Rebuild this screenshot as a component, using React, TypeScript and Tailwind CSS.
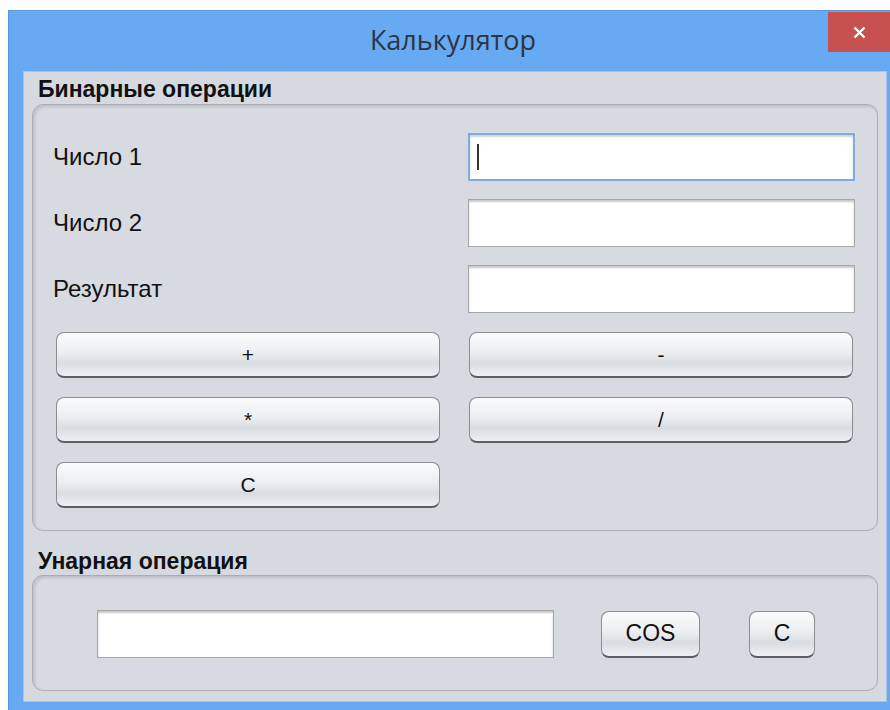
import { useState } from 'react'

// ─── Swing-style widgets on a Windows 8 frame ────────────────────────────────

const sans = 'font-["Liberation_Sans",Arial,sans-serif]'

function Field({ w, focused, value, onChange }: {
  w: string
  focused?: boolean
  value: string
  onChange: (v: string) => void
}) {
  return (
    <div
      className={
        'h-[48px] bg-white shrink-0 flex items-center ' + w + ' ' +
        (focused
          ? 'border-2 border-[#7fabdf] shadow-[inset_0_2px_2px_rgba(0,0,0,0.18)]'
          : 'border border-[#a6a6a6] shadow-[inset_0_2px_2px_rgba(0,0,0,0.22)]')
      }
    >
      {focused && <span className="ml-[7px] w-[2px] h-[26px] bg-[#333]" />}
      <input
        value={value}
        onChange={(e) => onChange(e.target.value)}
        className={`flex-1 h-full bg-transparent outline-none px-2 text-[22px] ${sans}`}
      />
    </div>
  )
}

function Btn({ label, w, h = 'h-[46px]', onClick, text = 'text-[21px]' }: {
  label: string
  w: string
  h?: string
  text?: string
  onClick?: () => void
}) {
  return (
    <button
      type="button"
      onClick={onClick}
      className={
        'shrink-0 rounded-[8px] border border-[#8a8c90] border-b-[#5c5e62] border-b-2 ' +
        'bg-[linear-gradient(#fbfbfc_0%,#eceef1_45%,#d9dce1_70%,#eef0f3_100%)] ' +
        'text-[#111] flex items-center justify-center ' + w + ' ' + h + ' ' + text + ' ' + sans
      }
    >
      {label}
    </button>
  )
}

function GroupTitle({ children }: { children: string }) {
  return (
    <div className={`pl-[14px] h-[26px] text-[23px] font-bold text-[#111] leading-[26px] ${sans}`}>
      {children}
    </div>
  )
}

const boxCls =
  'mx-[8px] rounded-[11px] border border-[#a9acb3] shadow-[inset_2px_2px_3px_rgba(0,0,0,0.12)] bg-[#d7dae0]'

export default function App() {
  const [a, setA] = useState('')
  const [b, setB] = useState('')
  const [res, setRes] = useState('')
  const [u, setU] = useState('')

  const calc = (op: string) => {
    const x = parseFloat(a)
    const y = parseFloat(b)
    if (isNaN(x) || isNaN(y)) return
    const r = op === '+' ? x + y : op === '-' ? x - y : op === '*' ? x * y : x / y
    setRes(String(r))
  }

  return (
    <div className="w-[890px] h-[710px] bg-white overflow-hidden pt-[10px] pl-[8px]">
      <div className="w-[882px] h-[700px] bg-[#68a9f4] border-l border-t border-[#5b95da] flex flex-col pl-[14px] pr-[3px] relative">
        {/* title bar */}
        <div className="h-[60px] shrink-0 flex items-center justify-center pr-[4px]">
          <span className='text-[27px] text-[#2e3440] font-["Open_Sans","Noto_Sans",sans-serif] -mt-[2px]'>
            Калькулятор
          </span>
        </div>
        <button
          type="button"
          className="absolute right-0 top-[1px] w-[62px] h-[40px] bg-[#c75050] flex items-center justify-center"
        >
          <svg width="13" height="13" viewBox="0 0 13 13">
            <path d="M1.5 1.5 L11.5 11.5 M11.5 1.5 L1.5 11.5" stroke="#fff" strokeWidth="2.4" />
          </svg>
        </button>

        {/* client area */}
        <div className="h-[631px] bg-[#d6d9df] border border-[#a9c3e6] flex flex-col pt-[4px]">
          <GroupTitle>Бинарные операции</GroupTitle>
          <div className={`${boxCls} mt-[2px] h-[427px] flex flex-col pt-[28px]`}>
            {[
              { label: 'Число 1', v: a, set: setA, focused: true },
              { label: 'Число 2', v: b, set: setB },
              { label: 'Результат', v: res, set: setRes },
            ].map((row, i) => (
              <div key={row.label} className={'flex items-center ' + (i ? 'mt-[18px]' : '')}>
                <span className={`w-[435px] pl-[20px] text-[24px] text-[#111] ${sans}`}>{row.label}</span>
                <Field w="w-[387px]" focused={row.focused} value={row.v} onChange={row.set} />
              </div>
            ))}

            <div className="flex pl-[23px] gap-[29px] mt-[19px]">
              <Btn label="+" w="w-[384px]" onClick={() => calc('+')} />
              <Btn label="-" w="w-[384px]" onClick={() => calc('-')} />
            </div>
            <div className="flex pl-[23px] gap-[29px] mt-[19px]">
              <Btn label="*" w="w-[384px]" onClick={() => calc('*')} />
              <Btn label="/" w="w-[384px]" onClick={() => calc('/')} />
            </div>
            <div className="flex pl-[23px] mt-[19px]">
              <Btn label="C" w="w-[384px]" onClick={() => { setA(''); setB(''); setRes('') }} />
            </div>
          </div>

          <div className="mt-[17px]">
            <GroupTitle>Унарная операция</GroupTitle>
          </div>
          <div className={`${boxCls} mt-[1px] h-[116px] flex items-center pl-[64px] pt-[2px]`}>
            <Field w="w-[457px]" value={u} onChange={setU} />
            <Btn
              label="COS"
              w="w-[99px] ml-[47px]"
              h="h-[47px]"
              text="text-[23px]"
              onClick={() => { const x = parseFloat(u); if (!isNaN(x)) setU(String(Math.cos(x))) }}
            />
            <Btn label="C" w="w-[66px] ml-[49px]" h="h-[47px]" text="text-[23px]" onClick={() => setU('')} />
          </div>
        </div>
      </div>
    </div>
  )
}
